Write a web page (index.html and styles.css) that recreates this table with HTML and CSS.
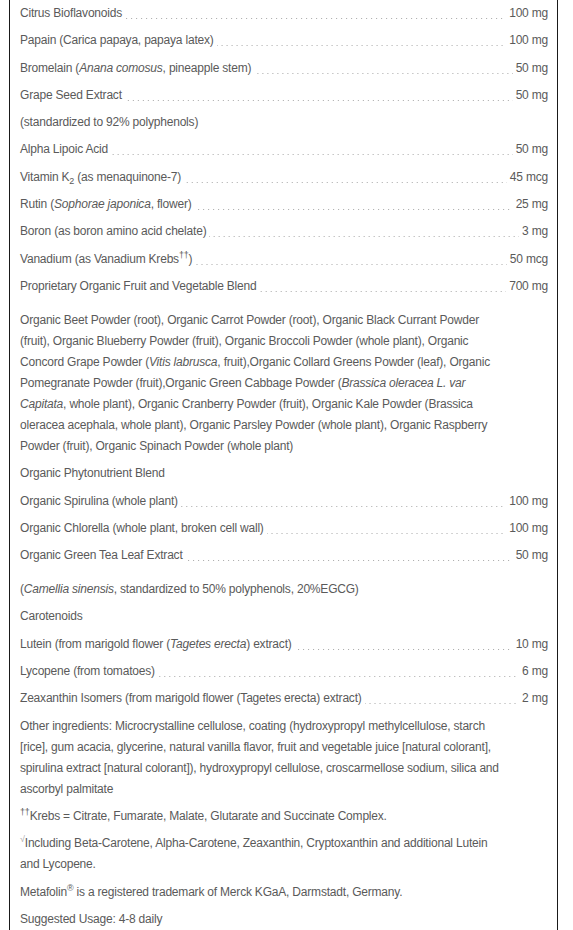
FILE: index.html
```html
<!DOCTYPE html>
<html>
<head>
<meta charset="utf-8">
<link rel="stylesheet" href="styles.css">
</head>
<body>
<div class="panel">
  <div class="row"><span class="name">Citrus Bioflavonoids</span><span class="dots"></span><span class="amt">100 mg</span></div>
  <div class="row"><span class="name">Papain (Carica papaya, papaya latex)</span><span class="dots"></span><span class="amt">100 mg</span></div>
  <div class="row"><span class="name">Bromelain (<i>Anana comosus</i>, pineapple stem)</span><span class="dots"></span><span class="amt">50 mg</span></div>
  <div class="row"><span class="name">Grape Seed Extract</span><span class="dots"></span><span class="amt">50 mg</span></div>
  <p class="line">(standardized to 92% polyphenols)</p>
  <div class="row"><span class="name">Alpha Lipoic Acid</span><span class="dots"></span><span class="amt">50 mg</span></div>
  <div class="row"><span class="name">Vitamin K<sub>2</sub> (as menaquinone-7)</span><span class="dots"></span><span class="amt">45 mcg</span></div>
  <div class="row"><span class="name">Rutin (<i>Sophorae japonica</i>, flower)</span><span class="dots"></span><span class="amt">25 mg</span></div>
  <div class="row"><span class="name">Boron (as boron amino acid chelate)</span><span class="dots"></span><span class="amt">3 mg</span></div>
  <div class="row"><span class="name">Vanadium (as Vanadium Krebs<sup>††</sup>)</span><span class="dots"></span><span class="amt">50 mcg</span></div>
  <div class="row"><span class="name">Proprietary Organic Fruit and Vegetable Blend</span><span class="dots"></span><span class="amt">700 mg</span></div>
  <p class="line spaced">Organic Beet Powder (root), Organic Carrot Powder (root), Organic Black Currant Powder (fruit), Organic Blueberry Powder (fruit), Organic Broccoli Powder (whole plant), Organic Concord Grape Powder (<i>Vitis labrusca</i>, fruit),Organic Collard Greens Powder (leaf), Organic Pomegranate Powder (fruit),Organic Green Cabbage Powder (<i>Brassica oleracea L. var Capitata</i>, whole plant), Organic Cranberry Powder (fruit), Organic Kale Powder (Brassica oleracea acephala, whole plant), Organic Parsley Powder (whole plant), Organic Raspberry Powder (fruit), Organic Spinach Powder (whole plant)</p>
  <p class="line">Organic Phytonutrient Blend</p>
  <div class="row"><span class="name">Organic Spirulina (whole plant)</span><span class="dots"></span><span class="amt">100 mg</span></div>
  <div class="row"><span class="name">Organic Chlorella (whole plant, broken cell wall)</span><span class="dots"></span><span class="amt">100 mg</span></div>
  <div class="row"><span class="name">Organic Green Tea Leaf Extract</span><span class="dots"></span><span class="amt">50 mg</span></div>
  <p class="line spaced">(<i>Camellia sinensis</i>, standardized to 50% polyphenols, 20%EGCG)</p>
  <p class="line">Carotenoids</p>
  <div class="row"><span class="name">Lutein (from marigold flower (<i>Tagetes erecta</i>) extract)</span><span class="dots"></span><span class="amt">10 mg</span></div>
  <div class="row"><span class="name">Lycopene (from tomatoes)</span><span class="dots"></span><span class="amt">6 mg</span></div>
  <div class="row"><span class="name">Zeaxanthin Isomers (from marigold flower (Tagetes erecta) extract)</span><span class="dots"></span><span class="amt">2 mg</span></div>
  <p class="line">Other ingredients: Microcrystalline cellulose, coating (hydroxypropyl methylcellulose, starch [rice], gum acacia, glycerine, natural vanilla flavor, fruit and vegetable juice [natural colorant], spirulina extract [natural colorant]), hydroxypropyl cellulose, croscarmellose sodium, silica and ascorbyl palmitate</p>
  <p class="line"><sup>††</sup>Krebs = Citrate, Fumarate, Malate, Glutarate and Succinate Complex.</p>
  <p class="line"><sup class="faint">√</sup>Including Beta-Carotene, Alpha-Carotene, Zeaxanthin, Cryptoxanthin and additional Lutein and Lycopene.</p>
  <p class="line">Metafolin<sup>®</sup> is a registered trademark of Merck KGaA, Darmstadt, Germany.</p>
  <p class="line">Suggested Usage: 4-8 daily</p>
</div>
</body>
</html>
```

FILE: styles.css
```css
html, body {
  margin: 0;
  padding: 0;
  background: #ffffff;
}

body {
  font-family: "Liberation Sans", Arial, sans-serif;
  font-size: 12px;
  letter-spacing: -0.2px;
  color: #5a5a5a;
}

.panel {
  margin-left: 9px;
  border-left: 1px solid #1a1a1a;
  border-right: 1px solid #1a1a1a;
  padding: 3px 9px 0 10px;
  box-sizing: border-box;
  width: 549px;
  min-height: 930px;
}

.row {
  display: flex;
  align-items: flex-end;
  line-height: 21px;
  margin: 0 0 6.3px 0;
}

.name {
  white-space: nowrap;
}

.dots {
  flex: 1;
  height: 1px;
  margin: 0 3px 5px 3px;
  background-image: linear-gradient(to right, #a8a8a8 1px, transparent 1px);
  background-size: 5px 1px;
  background-repeat: repeat-x;
  background-position: right bottom;
}

.amt {
  white-space: nowrap;
}

.line {
  margin: 0 0 6.3px 0;
  padding-right: 45px;
  line-height: 21px;
}

.line.spaced {
  margin-top: 13px;
}

sub, sup {
  font-size: 9px;
  line-height: 0;
}

sub {
  vertical-align: -3px;
}

sup {
  vertical-align: 5px;
}

.faint {
  color: #aaa;
}
```
